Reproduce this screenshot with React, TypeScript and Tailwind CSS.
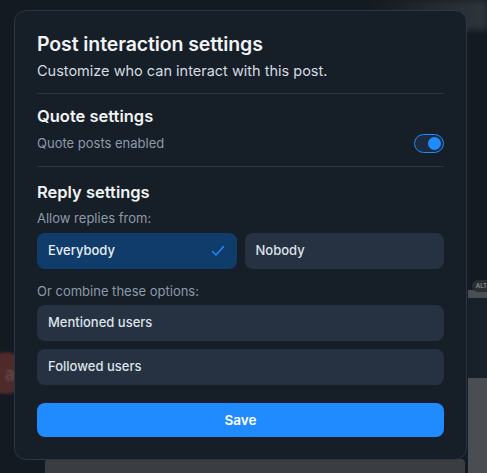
import { useState } from 'react';

type Choice = 'everybody' | 'nobody';

function Check() {
  return (
    <svg width="16" height="16" viewBox="0 0 16 16" fill="none" className="shrink-0">
      <path d="M2.5 8.5 L6 12 L13.5 3.5" stroke="#208bfe" strokeWidth="1.4" strokeLinecap="round" strokeLinejoin="round" />
    </svg>
  );
}

function Toggle({ on, onChange }: { on: boolean; onChange: (v: boolean) => void }) {
  return (
    <button
      onClick={() => onChange(!on)}
      className={`w-[30px] h-[19px] rounded-full border-[1.5px] flex items-center px-[2px] ${
        on ? 'border-[#208bfe] bg-[#1c2c40] justify-end' : 'border-[#3a4656] bg-[#1e2833] justify-start'
      }`}
    >
      <span className={`w-[13px] h-[13px] rounded-full ${on ? 'bg-[#208bfe]' : 'bg-[#6b7a8d]'}`} />
    </button>
  );
}

function OptionButton({ label, selected, onClick }: { label: string; selected?: boolean; onClick?: () => void }) {
  return (
    <button
      onClick={onClick}
      className={`w-full h-9 shrink-0 rounded-lg px-[11px] flex items-center justify-between text-[13px] font-medium ${
        selected ? 'bg-[#0f3c6b] text-[#e8edf3]' : 'bg-[#263241] text-[#dde3ea]'
      }`}
    >
      <span>{label}</span>
      {selected && <Check />}
    </button>
  );
}

export default function App() {
  const [quotes, setQuotes] = useState(true);
  const [choice, setChoice] = useState<Choice>('everybody');

  return (
    <div
      className="relative w-[487px] h-[473px] overflow-hidden bg-[#141a21]"
      style={{ fontFamily: 'Inter, "Noto Sans", sans-serif' }}
    >
      {/* blurred page behind the dialog */}
      <div className="absolute right-0 top-0 w-[120px] h-[30px] bg-gradient-to-r from-transparent via-[#2a2f33] to-[#3a4248] opacity-70 blur-[3px]" />
      <div className="absolute right-0 top-[290px] w-[19px] h-[183px] bg-[#4a4d52]" />
      <div className="absolute right-0 top-[298px] w-[19px] h-[80px] bg-[#18202a]" />
      <div className="absolute right-[-4px] top-[280px] h-[12px] px-1 rounded-full bg-[#2a2f35] text-[6px] font-bold text-[#7b838c] leading-[12px]">ALT</div>
      <div className="absolute left-[-14px] top-[352px] w-[40px] h-[42px] rounded-full bg-[#4e2a2b] blur-[1px] flex items-center justify-end pr-1 text-[18px] text-[#6e5150]">ar</div>
      <div className="absolute left-[45px] bottom-0 w-[420px] h-[14px] bg-[#3a3d42] rounded-t" />

      <div className="absolute left-[14px] top-[10px] w-[453px] rounded-xl border border-[#2c3745] bg-[#161e27] px-[22px] pt-[20px] pb-[22px] flex flex-col">
        <h2 className="text-[19.5px] leading-[26px] font-semibold text-[#f1f3f5] tracking-[-0.1px]">
          Post interaction settings
        </h2>
        <p className="text-[14.5px] leading-[22px] text-[#d4dbe2] mt-[3px]">Customize who can interact with this post.</p>

        <div className="h-px bg-[#2c3745] mt-[11px]" />

        <div className="mt-[10px] flex flex-col">
          <h3 className="text-[16.5px] leading-[24px] font-semibold text-[#f1f3f5]">Quote settings</h3>
          <div className="flex items-center justify-between mt-[4px]">
            <span className="text-[13px] leading-[22px] text-[#8d9aab]">Quote posts enabled</span>
            <Toggle on={quotes} onChange={setQuotes} />
          </div>
        </div>

        <div className="h-px bg-[#2c3745] mt-[12px]" />

        <div className="mt-[13px] flex flex-col">
          <h3 className="text-[16.5px] leading-[24px] font-semibold text-[#f1f3f5]">Reply settings</h3>
          <span className="text-[13px] leading-[22px] text-[#8d9aab] mt-[3px]">Allow replies from:</span>
          <div className="grid grid-cols-2 gap-2 mt-[4px]">
            <OptionButton label="Everybody" selected={choice === 'everybody'} onClick={() => setChoice('everybody')} />
            <OptionButton label="Nobody" selected={choice === 'nobody'} onClick={() => setChoice('nobody')} />
          </div>
          <span className="text-[13px] leading-[22px] text-[#8d9aab] mt-[11px]">Or combine these options:</span>
          <div className="flex flex-col gap-2 mt-[3px]">
            <OptionButton label="Mentioned users" />
            <OptionButton label="Followed users" />
          </div>
        </div>

        <button className="mt-[18px] h-[34px] rounded-lg bg-[#208bfe] text-white text-[13.5px] font-semibold">
          Save
        </button>
      </div>
    </div>
  );
}
